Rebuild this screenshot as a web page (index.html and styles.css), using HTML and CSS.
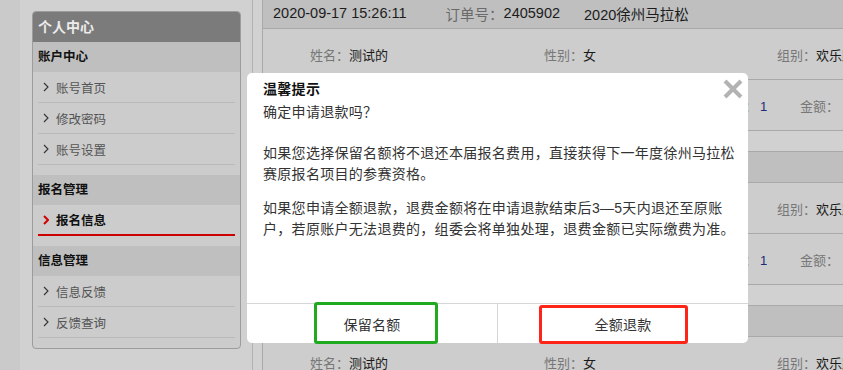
FILE: index.html
```html
<!DOCTYPE html>
<html lang="zh-CN">
<head>
<meta charset="utf-8">
<title>报名信息</title>
<link rel="stylesheet" href="styles.css">
</head>
<body>
<div class="page">
  <div class="strip"></div>
  <aside class="side">
    <div class="side-title">个人中心</div>
    <div class="group">
      <div class="group-title">账户中心</div>
      <a class="item"><svg class="chev" viewBox="0 0 6 10"><polyline points="1,1 5,5 1,9"/></svg>账号首页</a>
      <a class="item"><svg class="chev" viewBox="0 0 6 10"><polyline points="1,1 5,5 1,9"/></svg>修改密码</a>
      <a class="item"><svg class="chev" viewBox="0 0 6 10"><polyline points="1,1 5,5 1,9"/></svg>账号设置</a>
    </div>
    <div class="group">
      <div class="group-title">报名管理</div>
      <a class="item active"><svg class="chev" viewBox="0 0 6 10"><polyline points="1,1 5,5 1,9"/></svg>报名信息</a>
    </div>
    <div class="group">
      <div class="group-title">信息管理</div>
      <a class="item"><svg class="chev" viewBox="0 0 6 10"><polyline points="1,1 5,5 1,9"/></svg>信息反馈</a>
      <a class="item"><svg class="chev" viewBox="0 0 6 10"><polyline points="1,1 5,5 1,9"/></svg>反馈查询</a>
    </div>
  </aside>
  <main class="main">
    <div class="card">
      <div class="card-head"><span class="date">2020-09-17 15:26:11</span><span class="lbl">订单号：</span><span class="order">2405902</span><span class="race">2020徐州马拉松</span></div>
      <div class="row"><div><span class="lbl">姓名：</span><span class="val">测试的</span></div><div><span class="lbl">性别：</span><span class="val">女</span></div><div><span class="lbl">组别：</span><span class="val">欢乐跑</span></div></div>
      <div class="row row2"><div></div><div></div><div><span class="lbl">数量：</span><span class="num">1</span></div><div><span class="lbl">金额：</span></div></div>
    </div>
    <div class="card">
      <div class="card-head"></div>
      <div class="row"><div></div><div></div><div><span class="lbl">组别：</span><span class="val">欢乐跑</span></div></div>
      <div class="row row2"><div></div><div></div><div><span class="lbl">数量：</span><span class="num">1</span></div><div><span class="lbl">金额：</span></div></div>
    </div>
    <div class="card">
      <div class="card-head"></div>
      <div class="row"><div><span class="lbl">姓名：</span><span class="val">测试的</span></div><div><span class="lbl">性别：</span><span class="val">女</span></div><div><span class="lbl">组别：</span><span class="val">欢乐跑</span></div></div>
    </div>
  </main>
</div>

<div class="modal">
  <div class="modal-body">
    <div class="modal-title">温馨提示</div>
    <p class="msg m1">确定申请退款吗？</p>
    <p class="msg m2">如果您选择保留名额将不退还本届报名费用，直接获得下一年度徐州马拉松<br>赛原报名项目的参赛资格。</p>
    <p class="msg m3">如果您申请全额退款，退费金额将在申请退款结束后3—5天内退还至原账<br>户，若原账户无法退费的，组委会将单独处理，退费金额已实际缴费为准。</p>
  </div>
  <svg class="close" viewBox="0 0 20 20"><line x1="2" y1="2" x2="18" y2="18"/><line x1="18" y1="2" x2="2" y2="18"/></svg>
  <div class="modal-foot">
    <div class="btn">保留名额</div>
    <div class="btn">全额退款</div>
    <div class="mark mark-green"></div>
    <div class="mark mark-red"></div>
  </div>
</div>
</body>
</html>
```

FILE: styles.css
```css
html, body {
  margin: 0;
  padding: 0;
}
body {
  width: 843px;
  height: 370px;
  overflow: hidden;
  background: #d1d1d1;
  font-family: "Liberation Sans", "Noto Sans CJK SC", sans-serif;
  position: relative;
}
.page {
  display: flex;
  align-items: flex-start;
  height: 370px;
}
.strip {
  width: 20px;
  height: 370px;
  background: #cacaca;
  flex: none;
}
.side {
  flex: none;
  width: 207px;
  margin: 11px 0 0 12px;
  border: 1px solid #9c9c9c;
  border-radius: 4px;
  background: #cccccc;
  overflow: hidden;
}
.side-title {
  height: 30px;
  line-height: 30px;
  background: #7b7b7b;
  color: #ececec;
  font-weight: bold;
  font-size: 14px;
  padding-left: 5px;
}
.group {
  padding-bottom: 10px;
}
.group-title {
  height: 30px;
  line-height: 30px;
  background: #bfbfbf;
  color: #111;
  font-weight: bold;
  font-size: 12.5px;
  padding-left: 5px;
}
.item {
  display: flex;
  align-items: center;
  height: 30px;
  margin: 0 5px;
  padding-left: 5px;
  border-bottom: 1px solid #b9b9b9;
  font-size: 12.5px;
  color: #555;
}
.chev {
  width: 6px;
  height: 10px;
  margin-right: 7px;
  fill: none;
  stroke: #333;
  stroke-width: 1.1;
}
.item.active {
  height: 29px;
  border-bottom: 2px solid #cc0000;
  color: #111;
  font-weight: bold;
}
.item.active .chev {
  stroke: #d40000;
  stroke-width: 2;
}
.main {
  flex: none;
  margin-left: 11px;
  margin-top: -3px;
  border-left: 1px solid #b2b2b2;
  padding-left: 9px;
  height: 380px;
  width: 700px;
  display: flex;
  flex-direction: column;
  gap: 20px;
}
.card {
  border: 1px solid #a9a9a9;
  border-right: none;
  background: #cdcdcd;
}
.card-head {
  height: 30px;
  display: flex;
  align-items: center;
  padding-left: 10px;
  background: #bfbfbf;
  border-bottom: 1px solid #a9a9a9;
  font-size: 14.5px;
  color: #1c1c1c;
  white-space: nowrap;
}
.card-head .date {
  margin-right: 39px;
}
.card-head .lbl {
  color: #6a6a6a;
}
.card-head .order {
  margin-right: 24px;
}
.row {
  height: 50px;
  display: grid;
  grid-template-columns: 234px 233px 233px;
  align-items: center;
  padding-left: 47px;
  font-size: 13px;
  border-bottom: 1px solid #a9a9a9;
  white-space: nowrap;
}
.row:last-child {
  border-bottom: none;
}
.row2 {
  grid-template-columns: 234px 174px 82px 100px;
}
.lbl {
  color: #777;
}
.val {
  color: #1a1a1a;
}
.num {
  color: #1c2a78;
  margin-left: 3px;
}
.modal {
  position: absolute;
  left: 247px;
  top: 73px;
  width: 501px;
  height: 270px;
  background: #fff;
  border-radius: 5px;
  display: flex;
  flex-direction: column;
}
.modal-body {
  flex: 1;
  padding: 6px 8px 0 16px;
}
.modal-title {
  font-size: 14px;
  line-height: 20px;
  font-weight: bold;
  color: #111;
  letter-spacing: 0.3px;
}
.msg {
  margin: 0;
  font-size: 14px;
  line-height: 21px;
  letter-spacing: 0.3px;
  color: #333;
  white-space: nowrap;
}
.m1 {
  margin-top: 3px;
}
.m2 {
  margin-top: 20px;
}
.m3 {
  margin-top: 13px;
}
.close {
  position: absolute;
  left: 476px;
  top: 6px;
  width: 20px;
  height: 20px;
  stroke: #b3b3b3;
  stroke-width: 4;
}
.modal-foot {
  position: relative;
  height: 39px;
  border-top: 1px solid #d6d6d6;
  display: flex;
}
.btn {
  flex: 1;
  display: flex;
  align-items: center;
  justify-content: center;
  font-size: 14px;
  color: #333;
  letter-spacing: 0.3px;
}
.btn + .btn {
  border-left: 1px solid #d6d6d6;
}
.mark {
  position: absolute;
  box-sizing: border-box;
  border-radius: 3px;
}
.mark-green {
  left: 67px;
  top: -2px;
  width: 124px;
  height: 42px;
  border: 3px solid #1faa1f;
}
.mark-red {
  left: 292px;
  top: 1px;
  width: 149px;
  height: 39px;
  border: 3px solid #ff2418;
}
```
